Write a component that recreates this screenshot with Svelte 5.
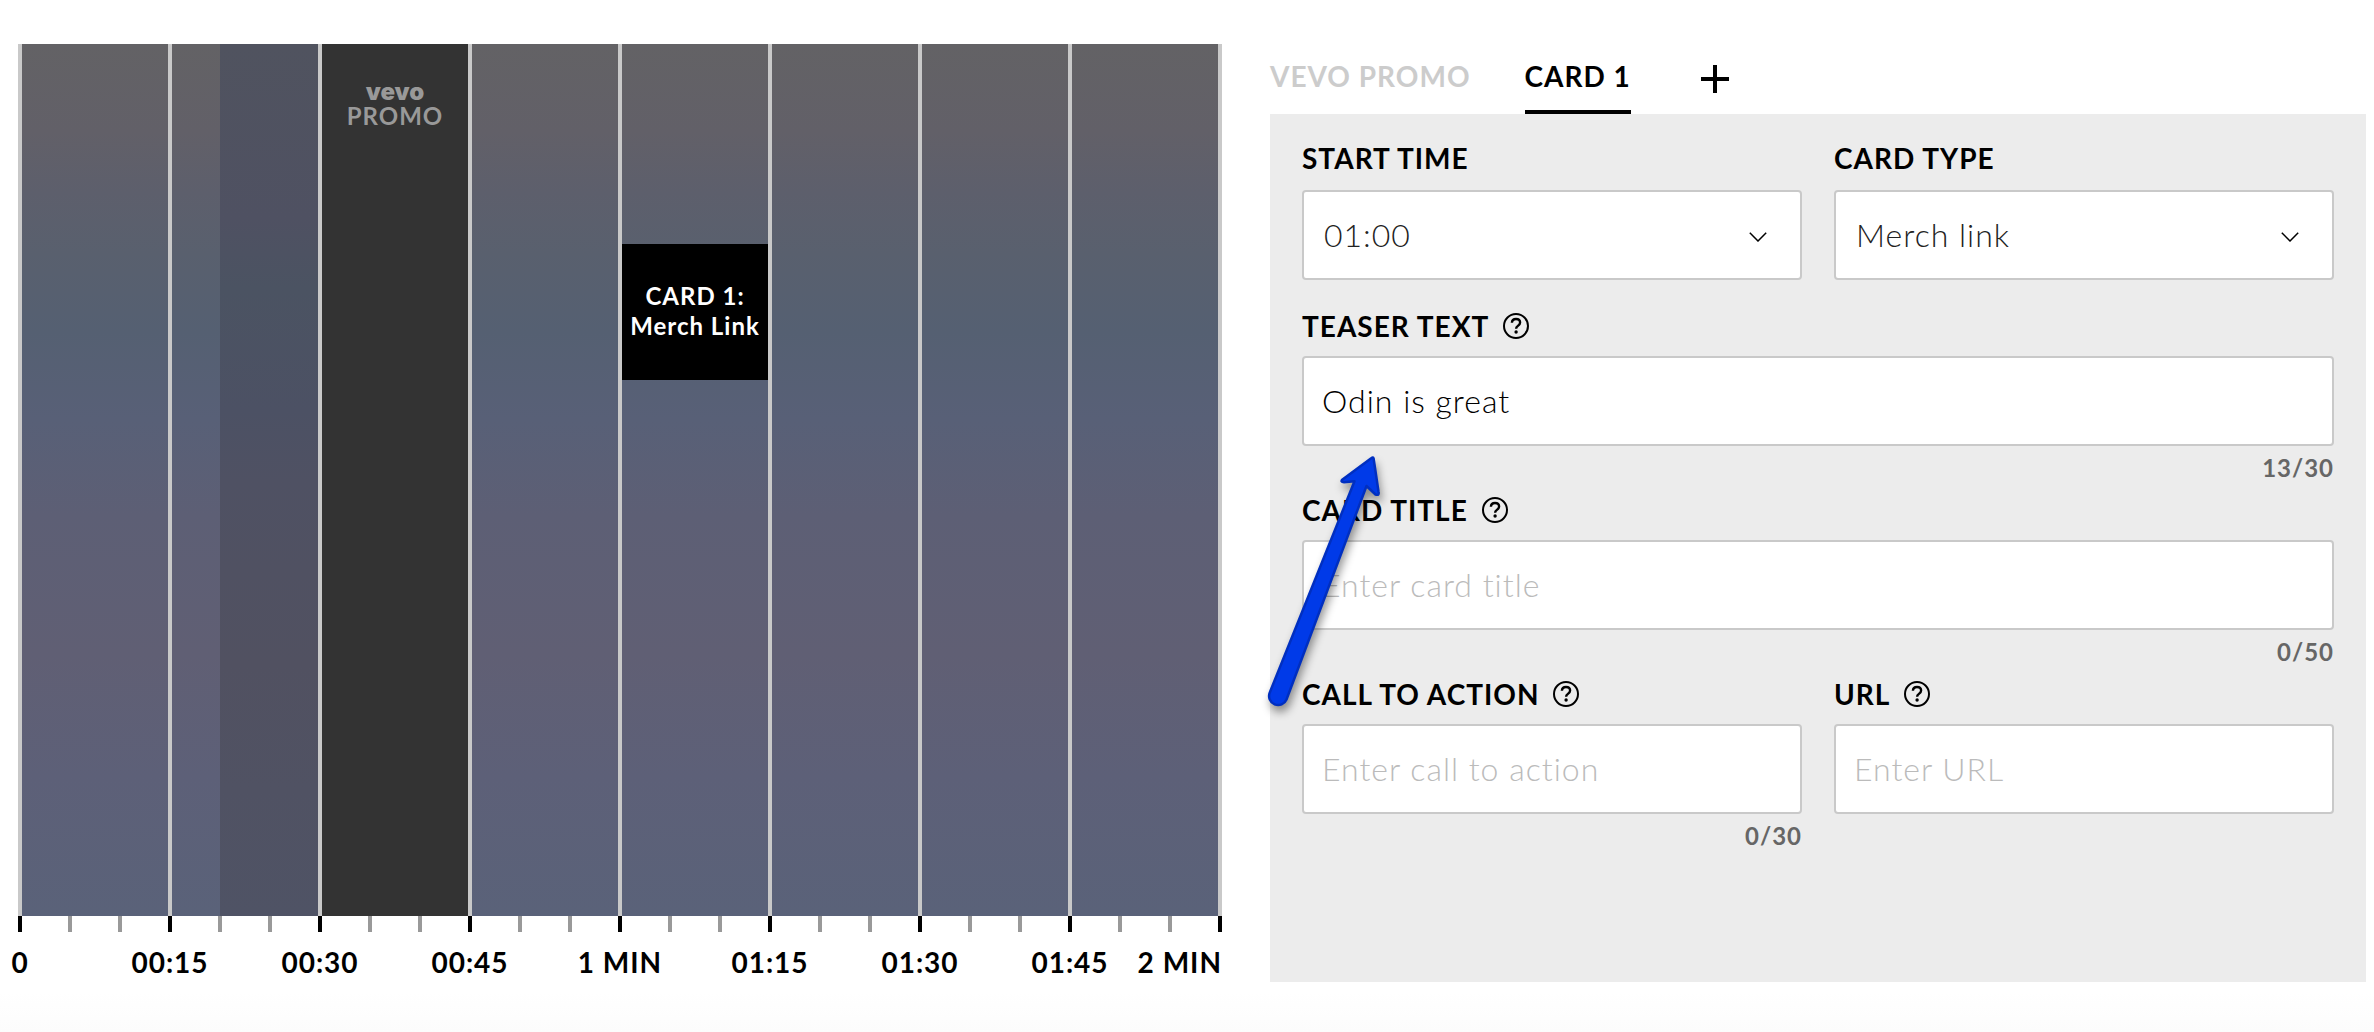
<script>
  const ticks = Array.from({ length: 25 }, (_, i) => i);
  const times = ['0', '00:15', '00:30', '00:45', '1 MIN', '01:15', '01:30', '01:45', '2 MIN'];

  let startTime = $state('01:00');
  let cardType = $state('Merch link');
  let teaser = $state('Odin is great');
  let title = $state('');
  let action = $state('');
  let url = $state('');
</script>

{#snippet help(topic)}
  <button type="button" class="help" aria-label={`Help: ${topic}`}>
    <svg viewBox="0 0 26 26" fill="none" stroke="currentColor">
      <circle cx="13" cy="13" r="12" stroke-width="2" />
      <path d="M8.9 9.8C9 7.4 10.600 6 13 6c2.400 0 4.100 1.400 4.100 3.500 0 1.700-1 2.500-2.200 3.400-1.100.8-1.800 1.400-1.800 2.900" stroke-width="2.400" />
      <circle cx="13.100" cy="19" r="1.700" fill="currentColor" stroke="none" />
    </svg>
  </button>
{/snippet}

{#snippet chevron()}
  <svg class="chevron" viewBox="0 0 18 10" fill="none" stroke="#000" stroke-width="1.500" aria-hidden="true">
    <path d="M.8.8 9 9 17.200.8" />
  </svg>
{/snippet}

<main>
  <section class="timeline" aria-label="Timeline">
    <div class="chart">
      <div class="slot"></div>
      <div class="slot"><div class="shade"></div></div>
      <div class="slot promo">
        <span class="brand">vevo</span>
        <span>PROMO</span>
      </div>
      <div class="slot"></div>
      <div class="slot">
        <div class="card"><span>CARD 1:</span><span>Merch Link</span></div>
      </div>
      <div class="slot"></div>
      <div class="slot"></div>
      <div class="slot"></div>
    </div>
    <div class="ticks">
      {#each ticks as i}
        <i class:major={i % 3 === 0}></i>
      {/each}
    </div>
    <div class="times">
      {#each times as time}
        <span>{time}</span>
      {/each}
    </div>
  </section>

  <section class="editor">
    <nav class="tabs">
      <button type="button" class="tab">VEVO PROMO</button>
      <button type="button" class="tab active">CARD 1</button>
      <button type="button" class="add" aria-label="Add card">
        <svg viewBox="0 0 28 28" stroke="#000" stroke-width="4"><path d="M0 14h28M14 0v28" /></svg>
      </button>
    </nav>

    <form class="panel">
      <div class="field">
        <div class="head"><label for="start">START TIME</label></div>
        <div class="select">
          <select id="start" bind:value={startTime}>
            <option>01:00</option>
            <option>01:15</option>
          </select>
          {@render chevron()}
        </div>
      </div>
      <div class="field">
        <div class="head"><label for="type">CARD TYPE</label></div>
        <div class="select">
          <select id="type" bind:value={cardType}>
            <option>Merch link</option>
          </select>
          {@render chevron()}
        </div>
      </div>
      <div class="field wide">
        <div class="head"><label for="teaser">TEASER TEXT</label>{@render help('teaser text')}</div>
        <input id="teaser" type="text" maxlength="30" bind:value={teaser} />
        <div class="count">{teaser.length}/30</div>
      </div>
      <div class="field wide">
        <div class="head"><label for="title">CARD TITLE</label>{@render help('card title')}</div>
        <input id="title" type="text" maxlength="50" placeholder="Enter card title" bind:value={title} />
        <div class="count">{title.length}/50</div>
      </div>
      <div class="field">
        <div class="head"><label for="action">CALL TO ACTION</label>{@render help('call to action')}</div>
        <input id="action" type="text" maxlength="30" placeholder="Enter call to action" bind:value={action} />
        <div class="count">{action.length}/30</div>
      </div>
      <div class="field">
        <div class="head"><label for="url">URL</label>{@render help('URL')}</div>
        <input id="url" type="url" placeholder="Enter URL" bind:value={url} />
      </div>

      <svg class="arrow" viewBox="0 0 120 260" aria-hidden="true">
        <path
          d="M111.500 9 82.500 30.500Q80 33 84 33.200L94.500 32.300 9.800 243.500A9 9 0 0 0 26.500 250.500L106.500 37 115.500 45.500Q119.500 47 118.500 42.500L113.600 9.500Q113 7.800 111.500 9Z"
          fill="#003ae8" stroke="#002fc0" stroke-width="2.500" stroke-linejoin="round"
        />
      </svg>
    </form>
  </section>
</main>

<style>
  :global(body) {
    margin: 0;
    background: #fff;
  }

  main {
    box-sizing: border-box;
    min-height: 100vh;
    display: grid;
    grid-template-columns: 1204fr 1096fr;
    align-items: start;
    align-content: start;
    gap: 48px;
    padding: 44px 8px 50px 18px;
    background: linear-gradient(to top, #fcfcfc, #fff 40px);
    font-family: Lato, "Open Sans", sans-serif;
    font-weight: 700;
    font-size: 28px;
    line-height: 32px;
    letter-spacing: 1px;
    color: #000;
  }

  .timeline {
    align-self: stretch;
    display: flex;
    flex-direction: column;
    min-width: 0;
  }

  .chart {
    flex: 1;
    display: grid;
    grid-template-columns: repeat(8, minmax(0, 1fr));
    border-right: 4px solid #c9c9c9;
    background: linear-gradient(#636265, #626068 10%, #5d5f6c 17%, #59606e 24%, #556072 33%, #586077 43%, #5d5f75 54%, #605f74 70%, #5d6078 84%, #5a6279);
  }

  .slot {
    display: flex;
    flex-direction: column;
    border-left: 4px solid #c9c9c9;
  }

  .shade {
    flex: 1;
    width: 67%;
    align-self: flex-end;
    background: linear-gradient(#50535f, #4f5162 20%, #4b5362 28%, #4c5164 42%, #4f5163 50%, #515161 71%, #4f5365);
  }

  .promo {
    align-items: center;
    padding-top: 36px;
    background: #333;
    color: #999;
    font-size: 24px;
    line-height: 24px;
  }

  .brand {
    font-family: Inter, sans-serif;
    font-weight: 900;
    letter-spacing: 0;
  }

  .card {
    box-sizing: border-box;
    display: flex;
    flex-direction: column;
    align-items: center;
    justify-content: center;
    height: 136px;
    margin-top: 200px;
    padding-bottom: 2px;
    background: #000;
    color: #fff;
    font-size: 24px;
    line-height: 30px;
    white-space: nowrap;
  }

  .ticks,
  .times {
    display: flex;
    justify-content: space-between;
  }

  .ticks i {
    width: 4px;
    height: 16px;
    background: #999;
  }

  .ticks .major {
    background: #000;
  }

  .times {
    padding: 14px 0 4px;
  }

  .times span {
    display: flex;
    justify-content: center;
    width: 4px;
    white-space: nowrap;
  }

  .times span:last-child {
    justify-content: flex-end;
  }

  .editor {
    min-width: 0;
  }

  button {
    padding: 0;
    border: 0;
    background: none;
    font: inherit;
    letter-spacing: inherit;
    color: inherit;
    cursor: pointer;
  }

  .tabs {
    display: flex;
    gap: 54px;
    height: 70px;
  }

  .tab {
    box-sizing: border-box;
    padding: 16px 0 18px;
    border-bottom: 4px solid transparent;
    color: #ccc;
  }

  .active {
    border-color: #000;
    color: #000;
  }

  .add {
    align-self: center;
    margin-left: 16px;
  }

  .add svg {
    display: block;
    width: 28px;
    height: 28px;
  }

  .panel {
    position: relative;
    display: grid;
    grid-template-columns: repeat(2, minmax(0, 1fr));
    column-gap: 32px;
    padding: 28px 32px 120px;
    background: #ececec;
  }

  .wide {
    grid-column: span 2;
  }

  .head {
    display: flex;
    align-items: center;
    gap: 14px;
    margin-bottom: 14px;
  }

  .help {
    width: 26px;
    height: 26px;
  }

  .help svg {
    display: block;
  }

  .select {
    display: grid;
    align-items: center;
    margin: 16px 0 30px;
  }

  .select > :global(*) {
    grid-area: 1 / 1;
  }

  .chevron {
    width: 18px;
    height: 10px;
    justify-self: end;
    margin: 4px 35px 0 0;
    pointer-events: none;
  }

  input,
  select {
    box-sizing: border-box;
    width: 100%;
    height: 90px;
    padding: 0 18px 2px;
    border: 2px solid #c9c9c9;
    border-radius: 4px;
    background: #fff;
    font: inherit;
    font-weight: 300;
    font-size: 32px;
    letter-spacing: 1px;
    color: #000;
    display: block;
  }

  select {
    appearance: none;
    padding: 0 20px;
    color: #222;
  }

  input::placeholder {
    color: #bbb;
    opacity: 1;
  }

  .count {
    margin-bottom: 4px;
    font-size: 24px;
    line-height: 44px;
    text-align: right;
    color: #666;
  }

  .arrow {
    position: absolute;
    left: -10px;
    top: 335px;
    width: 120px;
    height: 260px;
    overflow: visible;
    filter: drop-shadow(2px 6px 4px rgba(0, 0, 0, 0.4));
    pointer-events: none;
  }
</style>
